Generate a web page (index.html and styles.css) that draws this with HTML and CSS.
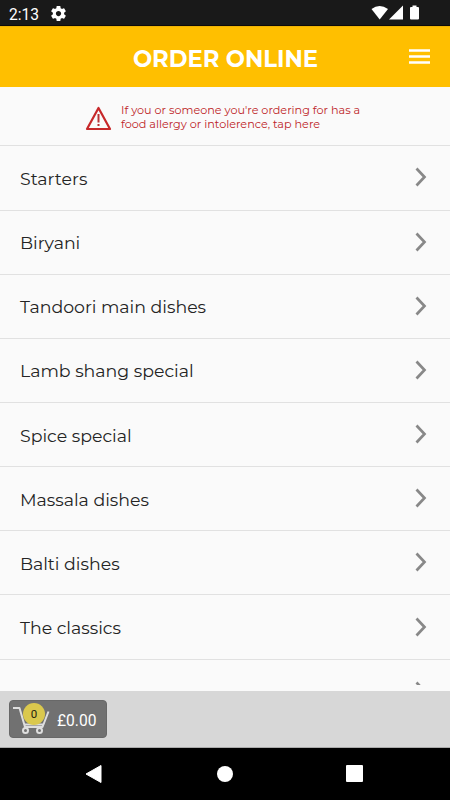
FILE: index.html
```
<!DOCTYPE html>
<html lang="en">
<head>
<meta charset="utf-8">
<title>Order Online</title>
<link rel="stylesheet" href="styles.css">
</head>
<body>
<svg width="0" height="0" class="defs"><defs><symbol id="chevron" viewBox="0 0 12 20"><path d="M1.5 1.5 L9.5 10 L1.5 18.5" fill="none" stroke="#888" stroke-width="2.7"/></symbol></defs></svg>
<div class="screen">
  <div class="status">
    <span class="time">2:13</span>
    <svg class="gear" width="15" height="15" viewBox="2 2 20 20"><path fill="#fff" d="M19.43 12.98c.04-.32.07-.64.07-.98s-.03-.66-.07-.98l2.11-1.65c.19-.15.24-.42.12-.64l-2-3.46c-.12-.22-.39-.3-.61-.22l-2.49 1c-.52-.4-1.08-.73-1.69-.98l-.38-2.65C14.46 2.18 14.25 2 14 2h-4c-.25 0-.46.18-.49.42l-.38 2.65c-.61.25-1.17.59-1.69.98l-2.49-1c-.23-.09-.49 0-.61.22l-2 3.46c-.13.22-.07.49.12.64l2.11 1.65c-.04.32-.07.65-.07.98s.03.66.07.98l-2.11 1.65c-.19.15-.24.42-.12.64l2 3.46c.12.22.39.3.61.22l2.49-1c.52.4 1.08.73 1.69.98l.38 2.65c.03.24.24.42.49.42h4c.25 0 .46-.18.49-.42l.38-2.65c.61-.25 1.17-.59 1.69-.98l2.49 1c.23.09.49 0 .61-.22l2-3.46c.12-.22.07-.49-.12-.64l-2.11-1.65zM12 15.5c-1.93 0-3.5-1.57-3.5-3.5s1.57-3.5 3.5-3.5 3.5 1.57 3.5 3.5-1.57 3.5-3.5 3.5z"/></svg>
    <svg class="signals" width="50" height="16" viewBox="0 0 50 16" fill="#fff"><path d="M0.5 4 Q8.500 -2.200 17 4 L8.700 14.500Z"/><path d="M18 14.500 L32 0.500 V14.500Z"/><path d="M41.500 2 V0.500 h4 V2 H47 q1 0 1 1 V13.500 q0 1-1 1 H40 q-1 0-1-1 V3 q0-1 1-1Z"/></svg>
  </div>
  <header class="header">
    <h1 class="title">ORDER ONLINE</h1>
    <svg class="burger" width="21" height="15" viewBox="0 0 21 15"><path d="M0 1.500H21M0 7.500H21M0 13.500H21" stroke="#fff" stroke-width="2.300"/></svg>
  </header>
  <div class="notice">
    <svg class="warning" width="27" height="25" viewBox="0 0 27 25"><path d="M13.500 2 L25 23 H2Z" fill="none" stroke="#c7282a" stroke-width="2.200" stroke-linejoin="round"/><path d="M13.500 8 V16.500M13.500 18 V20" stroke="#b93235" stroke-width="2"/></svg>
    <p class="notice-text">If you or someone you're ordering for has a<br>food allergy or intolerence, tap here</p>
  </div>
  <main class="menu">
    <div class="row"><span class="name">Starters</span><svg class="arrow"><use href="#chevron"/></svg></div>
    <div class="row"><span class="name">Biryani</span><svg class="arrow"><use href="#chevron"/></svg></div>
    <div class="row"><span class="name">Tandoori main dishes</span><svg class="arrow"><use href="#chevron"/></svg></div>
    <div class="row"><span class="name">Lamb shang special</span><svg class="arrow"><use href="#chevron"/></svg></div>
    <div class="row"><span class="name">Spice special</span><svg class="arrow"><use href="#chevron"/></svg></div>
    <div class="row"><span class="name">Massala dishes</span><svg class="arrow"><use href="#chevron"/></svg></div>
    <div class="row"><span class="name">Balti dishes</span><svg class="arrow"><use href="#chevron"/></svg></div>
    <div class="row"><span class="name">The classics</span><svg class="arrow"><use href="#chevron"/></svg></div>
    <div class="row"><span class="name"></span><svg class="arrow"><use href="#chevron"/></svg></div>
  </main>
  <footer class="basket-bar">
    <div class="basket">
      <svg class="cart" width="38" height="32" viewBox="0 0 38 32" fill="none" stroke="#dedede" stroke-width="2"><path d="M0 5 H6.500 L12 24 H29.500 L35.500 8.500" stroke-linejoin="round"/><path d="M11 21.500 H30.500"/><circle cx="12.500" cy="27.500" r="2.500"/><circle cx="26.500" cy="27.500" r="2.500"/></svg>
      <span class="count">0</span>
      <span class="total">£0.00</span>
    </div>
  </footer>
  <nav class="nav">
    <svg width="18" height="20" viewBox="0 0 18 20"><path d="M1 10 L16 1.500 V18.500Z" fill="#fff" stroke="#fff" stroke-linejoin="round"/></svg>
    <span class="home"></span>
    <span class="recent"></span>
  </nav>
</div>
</body>
</html>
```
FILE: styles.css
```
* { box-sizing: border-box; }
body { margin: 0; background: #fafafa; font-family: Montserrat, Inter, sans-serif; }
.defs { display: none; }
.screen { width: 450px; height: 800px; display: flex; flex-direction: column; overflow: hidden; }
.status { height: 26px; flex: none; display: flex; align-items: center; background: #191919; padding: 0 29px 0 9px; border-bottom: 1px solid #0d0b08; }
.time { font: 15.600px/20px Roboto, sans-serif; color: #fff; width: 41.500px; margin-top: 4px; white-space: nowrap; }
.gear { margin-top: 1px; }
.signals { margin-left: auto; }
.header { height: 61px; flex: none; display: flex; align-items: center; justify-content: flex-end; background: #ffbf00; padding: 0 20px 1px 0; border-top: 1px solid #eeb204; }
.title { margin: 4px 91px 0 0; font-size: 22.700px; line-height: 30px; font-weight: 700; color: #fff; white-space: nowrap; }
.burger { flex: none; }
.notice { height: 58.400px; flex: none; display: flex; padding: 17px 0 0 85px; }
.warning { margin-top: 2px; flex: none; }
.notice-text { margin: -1px 0 0 9px; font-size: 11.220px; line-height: 14px; color: #bd2427; white-space: nowrap; }
.menu { flex: none; height: 539.600px; overflow: hidden; }
.row { height: 64.170px; display: flex; align-items: center; justify-content: space-between; padding: 0 23px 0 20px; border-top: 1px solid #e1e1e1; }
.name { font-size: 17.350px; line-height: 24px; color: #242424; margin-top: 2px; white-space: nowrap; }
.arrow { width: 12px; height: 20px; margin-top: -1px; }
.basket-bar { height: 57px; flex: none; margin-top: 6px; background: #d7d7d7; padding: 9px; border-bottom: 1px solid #aaa; }
.basket { position: relative; width: 98px; height: 38px; background: #717171; border: 1px solid #686868; border-radius: 4px; display: flex; align-items: center; padding-left: 3px; }
.count { position: absolute; left: 13px; top: 2px; width: 22px; height: 22px; border-radius: 50%; background: #dac84d; color: #26230f; font: 11.500px/22px Roboto, sans-serif; text-align: center; }
.total { margin-left: 6px; font: 15.600px/20px Roboto, sans-serif; color: #fff; margin-top: 4px; }
.nav { flex: 1; background: #000; display: flex; align-items: center; justify-content: space-between; padding: 0 87px 0 85px; }
.home { width: 16px; height: 16px; border-radius: 50%; background: #fff; }
.recent { width: 17px; height: 17px; border-radius: 1px; background: #fff; }
```
